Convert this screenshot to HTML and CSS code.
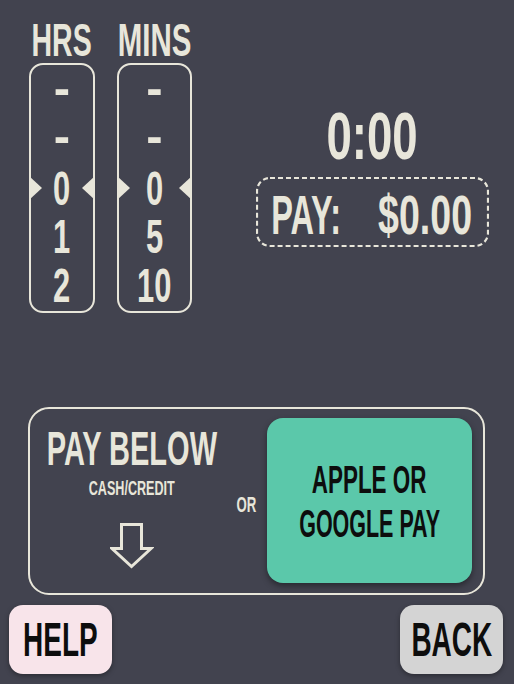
FILE: index.html
```html
<!DOCTYPE html>
<html lang="en">
<head>
<meta charset="utf-8">
<title>Parking timer</title>
<link rel="stylesheet" href="styles.css">
</head>
<body>
<div class="screen">
  <div class="top">
    <div class="pickers">
      <div class="picker hrs">
        <div class="label"><span class="t">HRS</span></div>
        <div class="wheel">
          <div class="row"><span class="dash">-</span></div>
          <div class="row"><span class="dash">-</span></div>
          <div class="row sel"><i class="tri tri-r"></i><span class="t">0</span><i class="tri tri-l"></i></div>
          <div class="row"><span class="t">1</span></div>
          <div class="row"><span class="t">2</span></div>
        </div>
      </div>
      <div class="picker mins">
        <div class="label"><span class="t">MINS</span></div>
        <div class="wheel">
          <div class="row"><span class="dash">-</span></div>
          <div class="row"><span class="dash">-</span></div>
          <div class="row sel"><i class="tri tri-r"></i><span class="t">0</span><i class="tri tri-l"></i></div>
          <div class="row"><span class="t">5</span></div>
          <div class="row"><span class="t">10</span></div>
        </div>
      </div>
    </div>
    <div class="summary">
      <div class="timer"><span class="t">0:00</span></div>
      <div class="pay">
        <svg class="pay-border" width="233" height="70" viewBox="0 0 233 70"><rect x="1" y="1" width="231" height="68" rx="13" fill="none" stroke="#e8e6da" stroke-width="2.2" stroke-dasharray="5 3"/></svg>
        <div class="slot slot-l"><span class="t">PAY:</span></div>
        <div class="slot slot-r"><span class="t">$0.00</span></div>
      </div>
    </div>
  </div>

  <div class="panel">
    <div class="below">
      <div class="below-title"><span class="t">PAY BELOW</span></div>
      <div class="below-sub"><span class="t">CASH/CREDIT</span></div>
      <svg class="arrow" width="44" height="48" viewBox="0 0 44 48"><path d="M11.5 3.5 H31.5 V27.5 H41 L21.5 45.5 L2 27.5 H11.5 Z" fill="none" stroke="#e8e6da" stroke-width="3" stroke-linejoin="miter"/></svg>
    </div>
    <div class="or"><span class="t">OR</span></div>
    <div class="wallet">
      <div class="wl wl1"><span class="t">APPLE OR</span></div>
      <div class="wl wl2"><span class="t">GOOGLE PAY</span></div>
    </div>
  </div>

  <div class="actions">
    <div class="btn help"><span class="t">HELP</span></div>
    <div class="btn back"><span class="t">BACK</span></div>
  </div>
</div>
</body>
</html>
```
FILE: styles.css
```css
html, body {
  margin: 0;
  padding: 0;
}
body {
  background: #42434f;
  color: #e8e6da;
  font-family: "Liberation Sans", Arial, sans-serif;
  font-weight: 700;
}
.screen {
  width: 514px;
  height: 684px;
  overflow: hidden;
}
.t {
  display: inline-block;
  white-space: nowrap;
  transform: scaleX(var(--s, 0.62));
}

/* top area */
.top {
  display: flex;
  padding: 20px 0 0 29px;
}
.pickers {
  display: flex;
  gap: 22px;
}
.picker {
  display: flex;
  flex-direction: column;
  align-items: center;
  gap: 3px;
  min-width: 0;
}
.hrs { width: 66px; }
.mins { width: 75px; }
.label {
  align-self: stretch;
  display: flex;
  justify-content: center;
  height: 40px;
  line-height: 40px;
  font-size: 46px;
}
.mins .label .t { --s: 0.64; }
.wheel {
  box-sizing: border-box;
  width: 100%;
  height: 250px;
  border: 2px solid #e8e6da;
  border-radius: 14px;
  padding: 1.75px 0;
  display: flex;
  flex-direction: column;
}
.row {
  height: 48.5px;
  line-height: 48.5px;
  font-size: 49px;
  display: flex;
  align-items: center;
  justify-content: center;
}
.row .t { --s: 0.63; }
.dash {
  display: inline-block;
  transform: translateY(-3px);
}
.row.sel {
  justify-content: space-between;
  margin: 0 -2px;
}
.tri {
  display: block;
  width: 0;
  height: 0;
  border-top: 12.5px solid transparent;
  border-bottom: 12.5px solid transparent;
}
.tri-r { border-left: 13px solid #e8e6da; }
.tri-l { border-right: 13px solid #e8e6da; }

.summary {
  flex: 1;
  margin-left: 39px;
  padding-top: 86px;
  display: flex;
  flex-direction: column;
  align-items: center;
}
.timer {
  height: 61px;
  line-height: 61px;
  font-size: 66px;
  display: flex;
  justify-content: center;
}
.timer .t { --s: 0.69; }
.pay {
  position: relative;
  box-sizing: border-box;
  width: 233px;
  height: 70px;
  margin-top: 10px;
  padding: 6px 17px 0 15px;
  display: flex;
  align-items: center;
  justify-content: space-between;
  font-size: 56px;
  line-height: 56px;
}
.pay-border {
  position: absolute;
  left: 0;
  top: 0;
}
.slot {
  display: flex;
  justify-content: center;
}
.slot-l { width: 70px; }
.slot-l .t { --s: 0.58; }
.slot-r { width: 94px; }
.slot-r .t { --s: 0.67; }

/* pay panel */
.panel {
  box-sizing: border-box;
  height: 188px;
  margin: 94px 29px 0 28px;
  border: 2px solid #e8e6da;
  border-radius: 21px;
  padding: 9px 11px 10px 0;
  display: flex;
}
.below {
  width: 204px;
  flex: none;
  align-self: flex-start;
  padding-top: 10px;
  display: flex;
  flex-direction: column;
  align-items: center;
}
.below-title {
  height: 40px;
  line-height: 40px;
  font-size: 49px;
  display: flex;
  justify-content: center;
}
.below-title .t { --s: 0.592; }
.below-sub {
  margin-top: 9.5px;
  height: 20px;
  line-height: 20px;
  font-size: 21px;
  display: flex;
  justify-content: center;
}
.below-sub .t { --s: 0.6; }
.arrow {
  display: block;
  margin-top: 23.5px;
}
.or {
  width: 24px;
  flex: none;
  align-self: center;
  padding-top: 8px;
  height: 20px;
  line-height: 20px;
  font-size: 22px;
  display: flex;
  justify-content: center;
}
.or .t { --s: 0.6; }
.wallet {
  flex: none;
  width: 205px;
  margin-left: 9px;
  background: #5bc8aa;
  border-radius: 16px;
  box-shadow: 0 3px 6px rgba(0, 0, 0, 0.4);
  color: #0d0d0d;
  padding-top: 3px;
  box-sizing: border-box;
  display: flex;
  flex-direction: column;
  align-items: center;
  justify-content: center;
  font-size: 38px;
}
.wl {
  height: 44px;
  line-height: 44px;
  display: flex;
  justify-content: center;
}
.wl1 .t { --s: 0.59; }
.wl2 .t { --s: 0.565; }

/* bottom buttons */
.actions {
  display: flex;
  justify-content: space-between;
  padding: 10px 11px 0 9px;
}
.btn {
  width: 103px;
  height: 69px;
  border-radius: 14px;
  box-shadow: 0 2px 5px rgba(0, 0, 0, 0.35);
  color: #0d0d0d;
  font-size: 49px;
  line-height: 69px;
  display: flex;
  justify-content: center;
  align-items: center;
}
.btn .t { --s: 0.57; }
.help { background: #f8e4ea; }
.back { background: #d4d4d4; }
```
